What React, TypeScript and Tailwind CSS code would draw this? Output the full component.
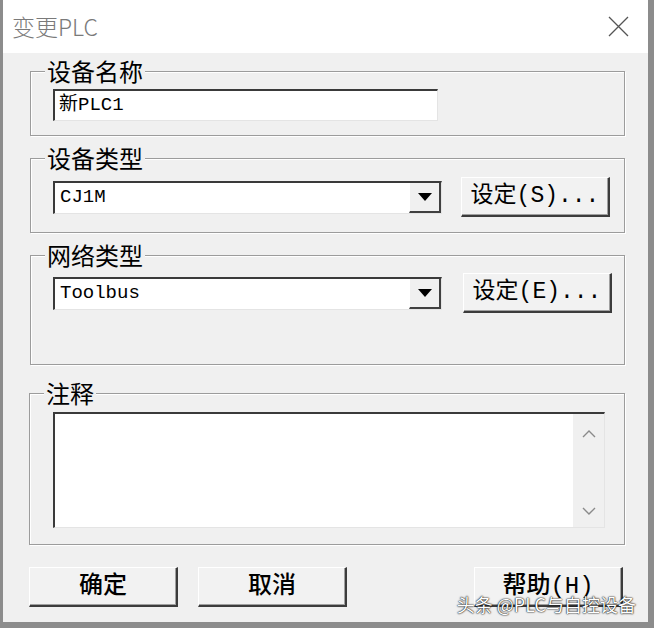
import React from "react";

const cjk = "font-['Noto_Sans_CJK_SC',sans-serif]";
const mono = "font-['Liberation_Mono','Noto_Sans_CJK_SC',monospace]";

function Group({
  label,
  className,
  children,
}: {
  label: string;
  className: string;
  children?: React.ReactNode;
}) {
  return (
    <div
      className={`relative border border-[#9c9c9c] shadow-[inset_1px_1px_0_#ffffff,1px_1px_0_#ffffff] ${className}`}
    >
      <span
        className={`absolute left-[14px] -top-[15px] bg-[#f0f0f0] px-[2px] text-[24px] leading-[28px] text-black ${cjk}`}
      >
        {label}
      </span>
      {children}
    </div>
  );
}

function Combo({ value }: { value: string }) {
  return (
    <div className="flex h-[33px] w-[389px] border-t-2 border-l-2 border-t-[#3a3a3a] border-l-[#3a3a3a] border-r border-b border-r-[#e4e4e4] border-b-[#e4e4e4] bg-white">
      <div className={`flex flex-1 items-center pl-[5px] text-[19px] text-black ${mono}`}>
        {value}
      </div>
      <div className="flex w-[32px] items-center justify-center border-l border-l-[#ffffff] border-r-2 border-b-2 border-r-[#404040] border-b-[#404040] bg-[#f0f0f0]">
        <svg width="14" height="8" viewBox="0 0 14 8">
          <polygon points="0,0 14,0 7,8" fill="#000" />
        </svg>
      </div>
    </div>
  );
}

function Button({
  children,
  className = "",
}: {
  children: React.ReactNode;
  className?: string;
}) {
  return (
    <button
      className={`flex h-[40px] w-[149px] items-center justify-center border-t border-l border-t-[#ffffff] border-l-[#ffffff] border-r-2 border-b-2 border-r-[#3c3c3c] border-b-[#3c3c3c] bg-[#f2f2f2] text-[23px] text-black shadow-[inset_-1px_-1px_0_#a0a0a0] ${mono} ${className}`}
    >
      {children}
    </button>
  );
}

export default function App() {
  return (
    <div className="flex h-[628px] w-[654px] flex-col border-l-[3px] border-r-[6px] border-b-[6px] border-[#8c8c8c] bg-[#f0f0f0]">
      <div className="flex h-[53px] items-center justify-between bg-white pl-[9px] pr-[19px]">
        <span className={`text-[23px] font-light text-[#7a7a7a] ${cjk}`}>变更PLC</span>
        <svg width="21" height="21" viewBox="0 0 21 21">
          <path d="M1 1 L20 20 M20 1 L1 20" stroke="#555" strokeWidth="1.3" fill="none" />
        </svg>
      </div>

      <div className="relative flex flex-1 flex-col">
        <Group label="设备名称" className="ml-[27px] mt-[18px] h-[65px] w-[595px] pl-[22px] pt-[17px]">
          <div className="flex h-[32px] w-[385px] items-center border-t-2 border-l-2 border-t-[#3a3a3a] border-l-[#3a3a3a] border-r border-b border-r-[#e4e4e4] border-b-[#e4e4e4] bg-white pl-[4px]">
            <span className={`text-[19px] text-black ${mono}`}>新PLC1</span>
          </div>
        </Group>

        <Group label="设备类型" className="ml-[27px] mt-[22px] h-[75px] w-[595px] pl-[22px] pt-[18px]">
          <div className="flex items-center">
            <Combo value="CJ1M" />
            <Button className="ml-[19px] h-[39px]">设定(S)...</Button>
          </div>
        </Group>

        <Group label="网络类型" className="ml-[27px] mt-[22px] h-[110px] w-[595px] pl-[22px] pt-[17px]">
          <div className="flex items-center">
            <Combo value="Toolbus" />
            <Button className="ml-[21px] h-[39px] w-[148px]">设定(E)...</Button>
          </div>
        </Group>

        <Group label="注释" className="ml-[26px] mt-[28px] h-[152px] w-[596px] pl-[23px] pt-[18px]">
          <div className="flex h-[116px] w-[552px] border-t-2 border-l-2 border-t-[#3a3a3a] border-l-[#3a3a3a] border-r border-b border-r-[#e4e4e4] border-b-[#e4e4e4] bg-white">
            <div className="flex-1" />
            <div className="flex w-[31px] flex-col items-center justify-between bg-[#f0f0f0] pb-[12px] pt-[16px]">
              <svg width="14" height="8" viewBox="0 0 14 8">
                <path d="M1 7 L7 1 L13 7" stroke="#8a8a8a" strokeWidth="1.4" fill="none" />
              </svg>
              <svg width="14" height="8" viewBox="0 0 14 8">
                <path d="M1 1 L7 7 L13 1" stroke="#8a8a8a" strokeWidth="1.4" fill="none" />
              </svg>
            </div>
          </div>
        </Group>

        <div className="mt-[22px] flex pl-[26px] pr-[25px]">
          <Button className="text-[24px] font-medium">确定</Button>
          <Button className="ml-[20px] text-[24px] font-medium">取消</Button>
          <Button className="ml-auto text-[24px] font-medium">帮助(H)</Button>
        </div>

        <span
          className={`absolute bottom-[4px] right-[12px] text-[18px] text-white [text-shadow:0_0_2px_#000,0_0_1px_#000] ${cjk}`}
        >
          头条 @PLC与自控设备
        </span>
      </div>
    </div>
  );
}
